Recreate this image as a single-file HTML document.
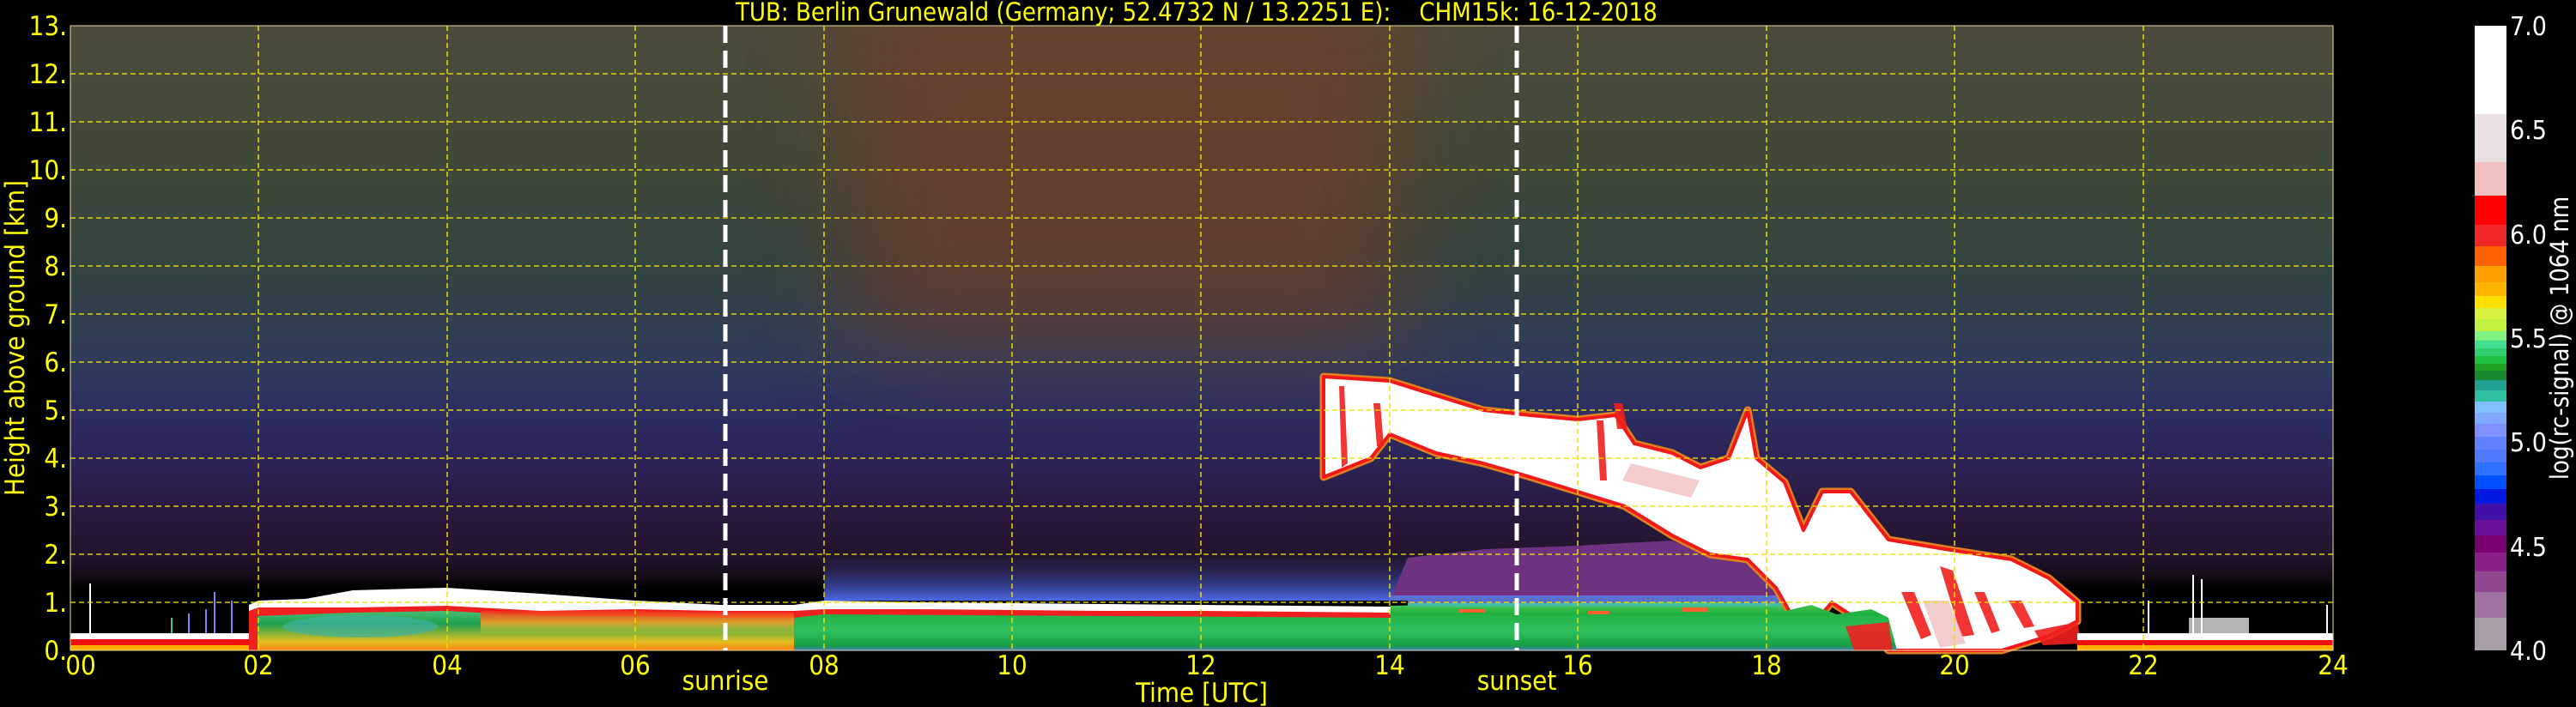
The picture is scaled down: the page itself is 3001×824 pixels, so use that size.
<!DOCTYPE html>
<html><head><meta charset="utf-8">
<style>
html,body{margin:0;padding:0;background:#000;width:3001px;height:824px;overflow:hidden}
svg{display:block}
text{font-family:"DejaVu Sans Condensed","DejaVu Sans","Liberation Sans",sans-serif}
</style></head><body>
<svg width="3001" height="824" viewBox="0 0 3001 824" xmlns="http://www.w3.org/2000/svg">
<defs>
<linearGradient id="bg" x1="0" y1="30" x2="0" y2="758" gradientUnits="userSpaceOnUse">
<stop offset="0" stop-color="#4c4a3a"/>
<stop offset="0.23" stop-color="#3f4838"/>
<stop offset="0.38" stop-color="#33443f"/>
<stop offset="0.54" stop-color="#2f3b5a"/>
<stop offset="0.62" stop-color="#2c2e62"/>
<stop offset="0.69" stop-color="#2c2458"/>
<stop offset="0.77" stop-color="#2a1a42"/>
<stop offset="0.85" stop-color="#22142c"/>
<stop offset="0.885" stop-color="#120a14"/>
<stop offset="0.9" stop-color="#000"/>
<stop offset="1" stop-color="#000"/>
</linearGradient>
<filter id="blur" x="-50%" y="-50%" width="200%" height="200%"><feGaussianBlur stdDeviation="55"/></filter>
<linearGradient id="glow" x1="0" y1="646" x2="0" y2="700" gradientUnits="userSpaceOnUse">
<stop offset="0" stop-color="#3a3a90" stop-opacity="0"/>
<stop offset="1" stop-color="#5068e8"/>
</linearGradient>
<linearGradient id="bl" x1="0" y1="690" x2="0" y2="758" gradientUnits="userSpaceOnUse">
<stop offset="0" stop-color="#e8e040"/>
<stop offset="0.25" stop-color="#50c880"/>
<stop offset="0.55" stop-color="#20a050"/>
<stop offset="0.85" stop-color="#e0c020"/>
<stop offset="1" stop-color="#ff8010"/>
</linearGradient>
<linearGradient id="ro" x1="0" y1="712" x2="0" y2="740" gradientUnits="userSpaceOnUse">
<stop offset="0" stop-color="#f03020"/>
<stop offset="0.5" stop-color="#ffa020"/>
<stop offset="1" stop-color="#e0e040" stop-opacity="0"/>
</linearGradient>
<linearGradient id="gr" x1="0" y1="700" x2="0" y2="758" gradientUnits="userSpaceOnUse">
<stop offset="0" stop-color="#60d060"/>
<stop offset="0.25" stop-color="#20b040"/>
<stop offset="0.6" stop-color="#30c060"/>
<stop offset="0.9" stop-color="#18a040"/>
<stop offset="1" stop-color="#4080c0"/>
</linearGradient>
<clipPath id="pc"><rect x="82" y="30" width="2636" height="728"/></clipPath>
</defs>

<rect x="82" y="30" width="2636" height="728" fill="url(#bg)"/>
<g clip-path="url(#pc)">
<rect x="990" y="-20" width="640" height="420" fill="#7a3a28" opacity="0.6" filter="url(#blur)"/>
</g>
<rect x="960" y="640" width="700" height="60" fill="url(#glow)"/>
<polygon points="1619,700 1640,650 1730,640 1838,636 1948,630 1992,648 2036,654 2069,690 2101,740 2134,704 2160,700 2160,706 1619,706" fill="#6e3280"/>
<rect x="1619" y="694" width="560" height="10" fill="#5a70d0"/>
<rect x="960" y="700" width="680" height="8" fill="#000"/>

<rect x="82" y="738" width="300" height="7" fill="#fff"/>
<rect x="82" y="745" width="300" height="7" fill="#f01010"/>
<rect x="82" y="752" width="300" height="6" fill="#ffb000"/>
<g stroke="#8080ff" stroke-width="2">
<line x1="250" y1="690" x2="250" y2="738"/><line x1="270" y1="700" x2="270" y2="738"/><line x1="240" y1="710" x2="240" y2="738"/>
<line x1="220" y1="715" x2="220" y2="738"/><line x1="105" y1="680" x2="105" y2="738" stroke="#fff"/><line x1="200" y1="720" x2="200" y2="738" stroke="#40c0a0"/>
</g>
<polygon points="290,758 290,705 301,700 356,698 411,688 520,685 630,692 740,700 840,705 925,705 960,700 1070,702 1180,703 1290,704 1400,705 1510,706 1620,707 1620,758" fill="#fff"/>
<polygon points="290,758 290,712 301,708 356,708 411,708 520,706 630,712 740,710 840,712 925,712 960,710 1070,710 1180,711 1290,712 1400,712 1510,713 1620,714 1620,758" fill="#f02020"/>
<polygon points="300,758 300,718 356,716 411,714 520,712 630,718 740,718 840,720 925,720 925,758" fill="url(#bl)"/>
<polygon points="560,712 630,712 740,712 840,714 925,714 925,740 560,740" fill="url(#ro)" opacity="0.85"/>
<polygon points="925,758 925,720 960,716 1620,720 1620,758" fill="url(#gr)"/>
<ellipse cx="420" cy="730" rx="90" ry="13" fill="#40b0a0" opacity="0.7"/>
<polygon points="1620,758 1620,706 1700,704 1800,706 1900,702 2000,702 2080,704 2080,758" fill="url(#gr)"/>
<rect x="1640" y="703" width="460" height="4" fill="#40c0a0"/>
<g fill="#ff6030"><rect x="1700" y="710" width="30" height="4"/><rect x="1850" y="712" width="25" height="4"/><rect x="1960" y="708" width="30" height="5"/></g>

<g stroke-linejoin="round">
<polygon points="1542,439 1619,444 1673,461 1728,478 1783,484 1838,489 1882,484 1904,517 1948,528 1981,545 2014,534 2036,478 2046,534 2079,562 2101,618 2123,573 2156,573 2200,629 2266,640 2343,652 2387,674 2420,702 2420,724 2387,741 2332,758 2200,758 2167,724 2134,702 2101,741 2069,685 2036,652 1992,646 1948,624 1893,590 1838,573 1783,556 1728,540 1673,528 1619,506 1597,534 1542,556" fill="#ffd000" stroke="#e08020" stroke-width="9"/>
<polygon points="1542,439 1619,444 1673,461 1728,478 1783,484 1838,489 1882,484 1904,517 1948,528 1981,545 2014,534 2036,478 2046,534 2079,562 2101,618 2123,573 2156,573 2200,629 2266,640 2343,652 2387,674 2420,702 2420,724 2387,741 2332,758 2200,758 2167,724 2134,702 2101,741 2069,685 2036,652 1992,646 1948,624 1893,590 1838,573 1783,556 1728,540 1673,528 1619,506 1597,534 1542,556" fill="#fff" stroke="#f01818" stroke-width="4"/>
</g>
<polygon points="2080,758 2080,712 2110,705 2140,716 2180,710 2200,720 2210,758" fill="url(#gr)"/>
<g fill="#f02020" opacity="0.9">
<polygon points="2215,690 2230,690 2250,740 2238,745"/>
<polygon points="2260,660 2275,665 2300,740 2285,742"/>
<polygon points="2300,690 2312,690 2330,735 2320,738"/>
<polygon points="2340,700 2355,700 2370,730 2358,732"/>
<polygon points="2150,730 2200,725 2205,758 2160,758"/>
<polygon points="2370,735 2420,725 2425,750 2380,752"/>
<polygon points="1600,470 1608,470 1612,520 1604,520"/>
<polygon points="1560,450 1566,450 1570,540 1563,545"/>
<polygon points="1860,490 1868,490 1872,560 1864,560"/>
<polygon points="1880,470 1890,470 1896,500 1884,500"/>
</g>
<g fill="#f0c0c0" opacity="0.8">
<polygon points="2240,700 2270,700 2290,750 2260,755"/>
<polygon points="1900,540 1980,560 1970,580 1890,560"/>
</g>
<rect x="2420" y="738" width="298" height="8" fill="#fff"/>
<rect x="2420" y="746" width="298" height="6" fill="#f01010"/>
<rect x="2420" y="752" width="298" height="6" fill="#ffb000"/>
<rect x="2550" y="720" width="70" height="18" fill="#fff" opacity="0.7"/>
<g stroke="#fff" stroke-width="2"><line x1="2555" y1="670" x2="2555" y2="738"/><line x1="2565" y1="675" x2="2565" y2="738"/><line x1="2503" y1="700" x2="2503" y2="738"/><line x1="2711" y1="705" x2="2711" y2="738"/></g>

<g stroke="#f0e000" stroke-width="1.6" stroke-dasharray="6 4" opacity="0.9">
<line x1="82" y1="86" x2="2718" y2="86"/><line x1="82" y1="142" x2="2718" y2="142"/><line x1="82" y1="198" x2="2718" y2="198"/>
<line x1="82" y1="254" x2="2718" y2="254"/><line x1="82" y1="310" x2="2718" y2="310"/><line x1="82" y1="366" x2="2718" y2="366"/>
<line x1="82" y1="422" x2="2718" y2="422"/><line x1="82" y1="478" x2="2718" y2="478"/><line x1="82" y1="534" x2="2718" y2="534"/>
<line x1="82" y1="590" x2="2718" y2="590"/><line x1="82" y1="646" x2="2718" y2="646"/><line x1="82" y1="702" x2="2718" y2="702"/>
<line x1="301" y1="30" x2="301" y2="758"/><line x1="521" y1="30" x2="521" y2="758"/><line x1="740" y1="30" x2="740" y2="758"/>
<line x1="960" y1="30" x2="960" y2="758"/><line x1="1179" y1="30" x2="1179" y2="758"/><line x1="1399" y1="30" x2="1399" y2="758"/>
<line x1="1619" y1="30" x2="1619" y2="758"/><line x1="1838" y1="30" x2="1838" y2="758"/><line x1="2058" y1="30" x2="2058" y2="758"/>
<line x1="2277" y1="30" x2="2277" y2="758"/><line x1="2497" y1="30" x2="2497" y2="758"/>
</g>
<rect x="82" y="30" width="2636" height="728" fill="none" stroke="#e8e0a0" stroke-width="1"/>
<g stroke="#fff" stroke-width="5" stroke-dasharray="20 9">
<line x1="845" y1="30" x2="845" y2="758"/><line x1="1767" y1="30" x2="1767" y2="758"/>
</g>

<g fill="#ffff00" font-size="31" text-anchor="end">
<text x="78" y="41">13.</text><text x="78" y="97">12.</text><text x="78" y="153">11.</text><text x="78" y="209">10.</text>
<text x="78" y="265">9.</text><text x="78" y="321">8.</text><text x="78" y="377">7.</text><text x="78" y="433">6.</text>
<text x="78" y="489">5.</text><text x="78" y="545">4.</text><text x="78" y="601">3.</text><text x="78" y="657">2.</text>
<text x="78" y="713">1.</text><text x="78" y="769">0.</text>
</g>
<g fill="#ffff00" font-size="31" text-anchor="middle">
<text x="94" y="786">00</text><text x="301" y="786">02</text><text x="521" y="786">04</text><text x="740" y="786">06</text>
<text x="960" y="786">08</text><text x="1179" y="786">10</text><text x="1399" y="786">12</text><text x="1619" y="786">14</text>
<text x="1838" y="786">16</text><text x="2058" y="786">18</text><text x="2277" y="786">20</text><text x="2497" y="786">22</text>
<text x="2718" y="786">24</text>
<text x="845" y="804">sunrise</text><text x="1767" y="804">sunset</text>
<text x="1400" y="818">Time [UTC]</text>
</g>
<text transform="translate(28 394) rotate(-90)" fill="#ffff00" font-size="31" text-anchor="middle">Height above ground [km]</text>
<text x="857" y="24" fill="#ffff00" font-size="29" xml:space="preserve">TUB: Berlin Grunewald (Germany; 52.4732 N / 13.2251 E):    CHM15k: 16-12-2018</text>

<g>
<rect x="2883" y="30" width="37" height="103" fill="#ffffff"/>
<rect x="2883" y="133" width="37" height="56" fill="#e8e0e0"/>
<rect x="2883" y="189" width="37" height="39" fill="#f0c0c0"/>
<rect x="2883" y="228" width="37" height="34" fill="#ff0000"/>
<rect x="2883" y="262" width="37" height="25" fill="#f02828"/>
<rect x="2883" y="287" width="37" height="23" fill="#ff6000"/>
<rect x="2883" y="310" width="37" height="19" fill="#ffa000"/>
<rect x="2883" y="329" width="37" height="16" fill="#ffb400"/>
<rect x="2883" y="345" width="37" height="14" fill="#ffe000"/>
<rect x="2883" y="359" width="37" height="13" fill="#d8f040"/>
<rect x="2883" y="372" width="37" height="14" fill="#c0f040"/>
<rect x="2883" y="386" width="37" height="11" fill="#80f080"/>
<rect x="2883" y="397" width="37" height="9" fill="#40e090"/>
<rect x="2883" y="406" width="37" height="9" fill="#30d070"/>
<rect x="2883" y="415" width="37" height="9" fill="#20c040"/>
<rect x="2883" y="424" width="37" height="8" fill="#20a020"/>
<rect x="2883" y="432" width="37" height="11" fill="#188830"/>
<rect x="2883" y="443" width="37" height="12" fill="#20a090"/>
<rect x="2883" y="455" width="37" height="13" fill="#30c0a0"/>
<rect x="2883" y="468" width="37" height="13" fill="#80c0ff"/>
<rect x="2883" y="481" width="37" height="13" fill="#80a8ff"/>
<rect x="2883" y="494" width="37" height="15" fill="#8090ff"/>
<rect x="2883" y="509" width="37" height="15" fill="#6080ff"/>
<rect x="2883" y="524" width="37" height="15" fill="#5078ff"/>
<rect x="2883" y="539" width="37" height="15" fill="#3070ff"/>
<rect x="2883" y="554" width="37" height="16" fill="#0050ff"/>
<rect x="2883" y="570" width="37" height="17" fill="#0018e0"/>
<rect x="2883" y="587" width="37" height="19" fill="#4010a8"/>
<rect x="2883" y="606" width="37" height="18" fill="#6a109a"/>
<rect x="2883" y="624" width="37" height="20" fill="#780070"/>
<rect x="2883" y="644" width="37" height="22" fill="#882088"/>
<rect x="2883" y="666" width="37" height="24" fill="#904890"/>
<rect x="2883" y="690" width="37" height="30" fill="#a070a0"/>
<rect x="2883" y="720" width="37" height="38" fill="#a89ea8"/>
</g>
<g fill="#fff" font-size="30">
<text x="2924" y="41">7.0</text><text x="2924" y="162">6.5</text><text x="2924" y="284">6.0</text>
<text x="2924" y="405">5.5</text><text x="2924" y="526">5.0</text><text x="2924" y="648">4.5</text><text x="2924" y="769">4.0</text>
</g>
<text transform="translate(2992 394) rotate(-90)" fill="#fff" font-size="29" text-anchor="middle">log(rc-signal) @ 1064 nm</text>
</svg>
</body></html>
